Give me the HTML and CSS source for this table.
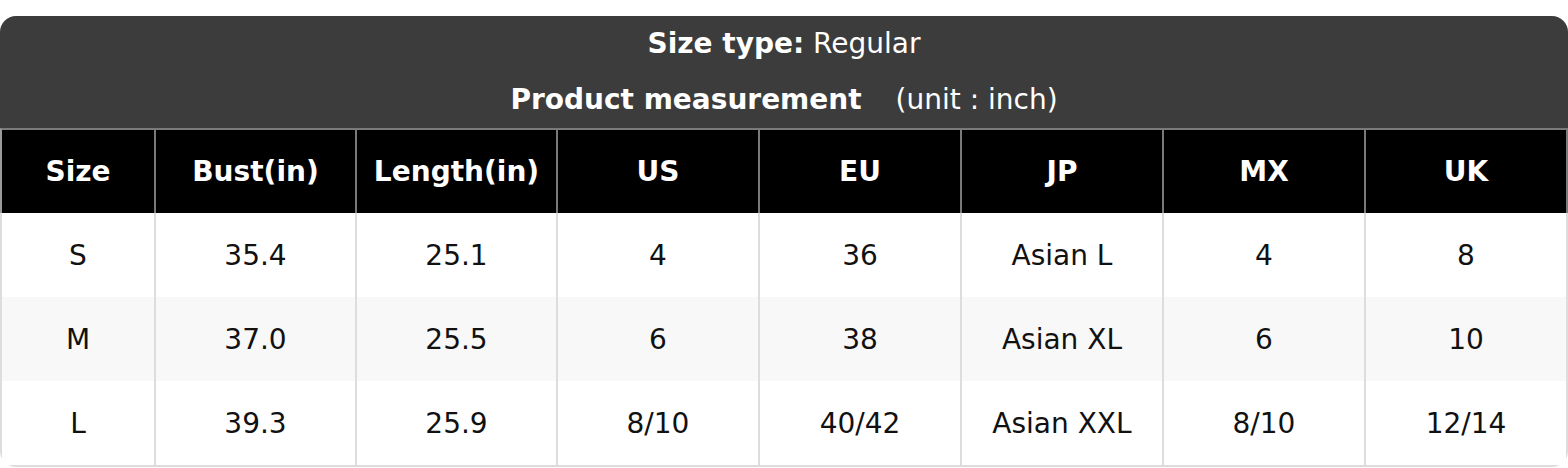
FILE: index.html
```html
<!DOCTYPE html>
<html>
<head>
<meta charset="utf-8">
<link rel="stylesheet" href="styles.css">
</head>
<body>
<div class="page">
  <div class="chart">
    <div class="title">
      <div class="line"><b>Size type:</b> Regular</div>
      <div class="line"><b>Product measurement</b><span class="unit">(unit : inch)</span></div>
    </div>
    <div class="grid">
      <div class="th first">Size</div>
      <div class="th">Bust(in)</div>
      <div class="th">Length(in)</div>
      <div class="th">US</div>
      <div class="th">EU</div>
      <div class="th">JP</div>
      <div class="th">MX</div>
      <div class="th last">UK</div>

      <div class="td first">S</div>
      <div class="td">35.4</div>
      <div class="td">25.1</div>
      <div class="td">4</div>
      <div class="td">36</div>
      <div class="td">Asian L</div>
      <div class="td">4</div>
      <div class="td last">8</div>

      <div class="td first alt">M</div>
      <div class="td alt">37.0</div>
      <div class="td alt">25.5</div>
      <div class="td alt">6</div>
      <div class="td alt">38</div>
      <div class="td alt">Asian XL</div>
      <div class="td alt">6</div>
      <div class="td last alt">10</div>

      <div class="td first end">L</div>
      <div class="td end">39.3</div>
      <div class="td end">25.9</div>
      <div class="td end">8/10</div>
      <div class="td end">40/42</div>
      <div class="td end">Asian XXL</div>
      <div class="td end">8/10</div>
      <div class="td last end">12/14</div>
    </div>
  </div>
</div>
</body>
</html>
```
FILE: styles.css
```css
html, body {
  margin: 0;
  padding: 0;
  background: #ffffff;
}
body {
  font-family: "DejaVu Sans", "Liberation Sans", sans-serif;
  font-size: 28px;
  color: #111111;
}
.page {
  padding-top: 16px;
}
.chart {
  border-radius: 16px;
  overflow: hidden;
  background: #ffffff;
}
.title {
  background: #3c3c3c;
  color: #ffffff;
  text-align: center;
}
.title .line {
  height: 56px;
  line-height: 56px;
}
.title .unit {
  margin-left: 34px;
}
.grid {
  display: grid;
  grid-template-columns: 154px 201px 201px 202px 202px 202px 202px 204px;
}
.th, .td {
  display: flex;
  align-items: center;
  justify-content: center;
  box-sizing: border-box;
  white-space: nowrap;
}
.th {
  background: #000000;
  color: #ffffff;
  font-weight: bold;
  height: 85px;
  border-top: 2px solid #7a7a7a;
  border-left: 2px solid #7a7a7a;
}
.th.first {
  border-left-color: #9a9a9a;
}
.th.last {
  border-right: 2px solid #7a7a7a;
}
.td {
  height: 84px;
  border-left: 2px solid #dddddd;
  background: #ffffff;
}
.td.last {
  border-right: 2px solid #dddddd;
}
.td.alt {
  background: #f8f8f8;
}
.td.end {
  height: 86px;
  border-bottom: 2px solid #dddddd;
}
```
